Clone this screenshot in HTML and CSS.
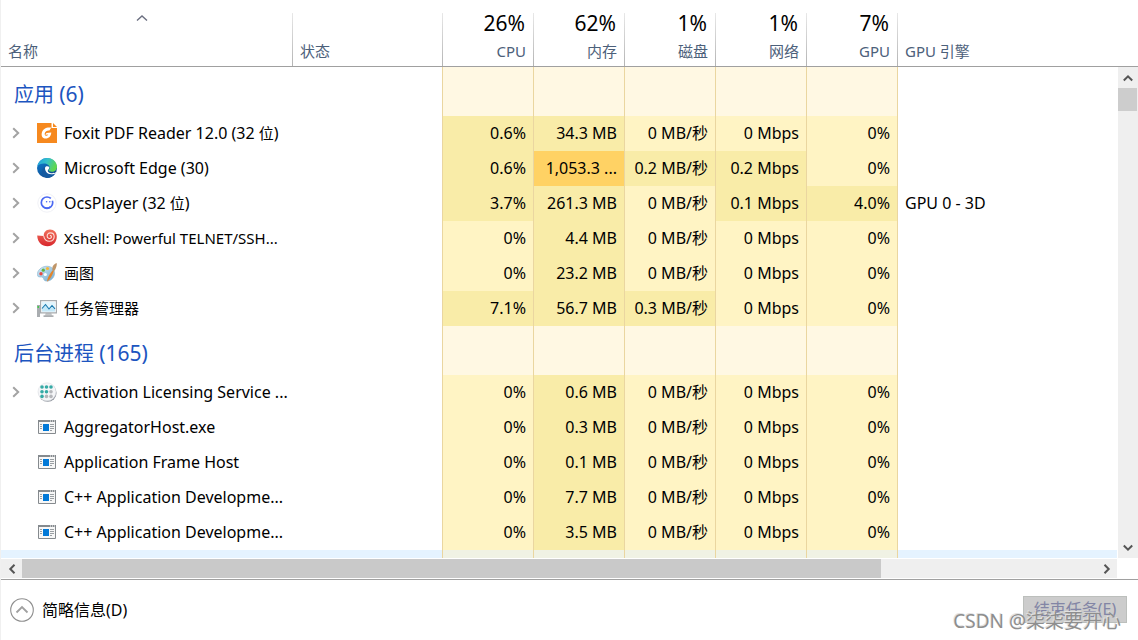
FILE: index.html
```
<!DOCTYPE html>
<html lang="zh-CN">
<head>
<meta charset="utf-8">
<title>任务管理器</title>
<link rel="stylesheet" href="styles.css">
</head>
<body>
<svg class="defs" width="0" height="0" aria-hidden="true">
  <defs>
    <linearGradient id="edge-top" x1="0" y1="0" x2="1" y2="0.4"><stop offset="0" stop-color="#1b9de2"/><stop offset="0.5" stop-color="#35c1c9"/><stop offset="1" stop-color="#5fd84f"/></linearGradient>
    <linearGradient id="edge-low" x1="0" y1="0" x2="0.6" y2="1"><stop offset="0" stop-color="#0c7fd6"/><stop offset="1" stop-color="#114a8b"/></linearGradient>
    <linearGradient id="shell-red" x1="0" y1="0" x2="0" y2="1"><stop offset="0" stop-color="#f0705c"/><stop offset="1" stop-color="#d8262c"/></linearGradient>
    <linearGradient id="pal" x1="0" y1="0" x2="1" y2="1"><stop offset="0" stop-color="#d6ecf8"/><stop offset="1" stop-color="#6fa9d0"/></linearGradient>
    <symbol id="chevron" viewBox="0 0 8 12"><path d="M1.2 1.2 6.2 6l-5 4.8" fill="none" stroke="#a3a3a3" stroke-width="2"/></symbol>
    <symbol id="exe" viewBox="0 0 20 20">
      <path d="M1.500 3.500h17v13h-17z" fill="#f7f7f7" stroke="#858a8e"/>
      <path d="M1 3h18v2H1z" fill="#858a8e"/>
      <path d="M13 4h1M15 4h1M17 4h1" stroke="#fff"/>
      <path d="M3 7.500h2M3 9.500h2M3 11.500h2M13 7.500h4M13 9.500h4M13 11.500h4M13 13.500h2" stroke="#9a9fa3"/>
      <path d="M6 7h6v7H6z" fill="#0078d7"/>
    </symbol>
  </defs>
</svg>
<main class="app">
  <section class="processes">
    <div class="table-wrap">
      <table class="grid">
        <colgroup><col class="col-name"><col class="col-status"><col class="col-num"><col class="col-num"><col class="col-num"><col class="col-num"><col class="col-num"><col></colgroup>
        <thead>
          <tr>
            <th scope="col" class="text-col sorted"><svg class="sort" viewBox="0 0 12 6" width="12" height="6"><path d="M1 5.500 6 1l5 4.500" fill="none" stroke="#6b6f80" stroke-width="1.400"/></svg><span class="label">名称</span></th>
            <th scope="col" class="text-col"><span class="label">状态</span></th>
            <th scope="col"><span class="total">26%</span><span class="label">CPU</span></th>
            <th scope="col"><span class="total">62%</span><span class="label">内存</span></th>
            <th scope="col"><span class="total">1%</span><span class="label">磁盘</span></th>
            <th scope="col"><span class="total">1%</span><span class="label">网络</span></th>
            <th scope="col"><span class="total">7%</span><span class="label">GPU</span></th>
            <th scope="col" class="text-col last"><span class="label">GPU 引擎</span></th>
          </tr>
        </thead>
        <tbody>
          <tr class="group"><th colspan="2" scope="rowgroup">应用 <span class="count">(6)</span></th><td class="heat"></td><td class="heat"></td><td class="heat"></td><td class="heat"></td><td class="heat"></td><td></td></tr>
          <tr>
            <td colspan="2" class="lead"><div class="name"><button class="expand" aria-label="展开"><svg width="8" height="12"><use href="#chevron"/></svg></button>
              <svg class="icon" viewBox="0 0 20 20"><path d="M0 0h14.500v5H20v15H0z" fill="#f6891f"/><path d="M16 0l4 4h-4z" fill="#f6891f"/><path d="M14.200 4.800C10 4 5.500 5.800 4.700 10.500c-.5 3 1.300 5 4 5 3.200 0 5.300-2.300 5.600-6l-4.800.6-1.200 1.600 2.900-.3c-.5 1-1.300 1.500-2.200 1.400-1-.1-1.500-1-1.300-2.200.4-2.300 2.500-3.300 4.700-3.100z" fill="#fff"/></svg>
              <span class="latin">Foxit PDF Reader 12.0 (32 <span class="han">位</span>)</span></div></td>
            <td class="heat mid">0.6%</td><td class="heat mid">34.3 MB</td><td class="heat low">0 MB/秒</td><td class="heat low">0 Mbps</td><td class="heat low">0%</td><td></td>
          </tr>
          <tr>
            <td colspan="2" class="lead"><div class="name"><button class="expand" aria-label="展开"><svg width="8" height="12"><use href="#chevron"/></svg></button>
              <svg class="icon" viewBox="0 0 20 20"><circle cx="10" cy="10" r="10" fill="url(#edge-low)"/><path d="M.3 8.500C1.500 3 5.500 0 10.200 0 16 0 20 4.400 20 8.800c0 3-2.300 5-5 5-2 0-3.500-.8-3.300-1.700.2-.6 1-1 1-2.400C12.700 7.200 10 5.400 7 5.400c-3 0-5.700 1-6.700 3.100z" fill="url(#edge-top)"/><path d="M8 9.500c-1.400 4 1.600 8.200 6 8.200 1.800 0 3.400-.6 4.200-1.600l1-2.100c-1 .8-2.500 1.200-4 1.200-3 0-5-1.500-4.300-3 .6-1 1.700-1.500 1.300-3.200-.9-1-3.400-1.200-4.200.5z" fill="#fff"/><path d="M8.200 8.800c-1 4 2 7.600 6.300 7.500 1.500 0 3-.4 3.900-.8-1.500 2.500-4.900 4.500-8.400 4.500-5.500-1-7-8.500-1.800-11.200z" fill="#1459a0"/></svg>
              <span class="latin">Microsoft Edge (30)</span></div></td>
            <td class="heat mid">0.6%</td><td class="heat high">1,053.3 ...</td><td class="heat mid">0.2 MB/秒</td><td class="heat mid">0.2 Mbps</td><td class="heat low">0%</td><td></td>
          </tr>
          <tr>
            <td colspan="2" class="lead"><div class="name"><button class="expand" aria-label="展开"><svg width="8" height="12"><use href="#chevron"/></svg></button>
              <svg class="icon" viewBox="0 0 20 20"><circle cx="10" cy="10" r="9.200" fill="#fff" stroke="#f0f1f6"/><circle cx="10" cy="9.700" r="5.700" fill="none" stroke="#4a68f2" stroke-width="1.700" stroke-dasharray="33.300 2.500" stroke-dashoffset="3"/><circle cx="9.600" cy="8.800" r=".8" fill="#4a68f2"/><circle cx="12.800" cy="8.800" r=".8" fill="#4a68f2"/><path d="M5.500 12.500c2 3 6 3 8 1" fill="none" stroke="#4a68f2" stroke-width="1.200"/></svg>
              <span class="latin">OcsPlayer (32 <span class="han">位</span>)</span></div></td>
            <td class="heat mid">3.7%</td><td class="heat mid">261.3 MB</td><td class="heat low">0 MB/秒</td><td class="heat mid">0.1 Mbps</td><td class="heat mid">4.0%</td><td class="engine">GPU 0 - 3D</td>
          </tr>
          <tr>
            <td colspan="2" class="lead"><div class="name"><button class="expand" aria-label="展开"><svg width="8" height="12"><use href="#chevron"/></svg></button>
              <svg class="icon" viewBox="0 0 20 20"><path d="M.2 7.500 6.800 8C6.500 4.500 9 1.600 13 1.600c4 0 6.800 2.900 6.800 7C19.800 14 16 18.300 10.500 18.300 5 18.300.5 14.500.2 7.500z" fill="url(#shell-red)"/><path d="M6.800 8c.2 3 2.600 5.400 5.700 5.300 3-.1 4.800-2.200 4.700-4.700-.1-2.200-1.700-3.700-3.800-3.700S10 6.500 10.200 8.200c.1 1.500 1.200 2.400 2.500 2.300 1.200-.1 1.900-1 1.700-2-.2-.7-.8-1.100-1.500-.9" fill="none" stroke="#fde0d8" stroke-width="1.100"/></svg>
              <span>Xshell: Powerful TELNET/SSH...</span></div></td>
            <td class="heat low">0%</td><td class="heat mid">4.4 MB</td><td class="heat low">0 MB/秒</td><td class="heat low">0 Mbps</td><td class="heat low">0%</td><td></td>
          </tr>
          <tr>
            <td colspan="2" class="lead"><div class="name"><button class="expand" aria-label="展开"><svg width="8" height="12"><use href="#chevron"/></svg></button>
              <svg class="icon" viewBox="0 0 20 20"><path d="M1 8.500C3 4.500 8 2.500 12 3.500c4 .8 6 4 5.500 7.500-.5 4.500-4.500 7.500-8.500 7-2.500-.3-2-2.500-3.300-3.600C4.300 13.200 1.200 15 .4 12.500c-.3-1.200 0-2.700.6-4z" fill="url(#pal)" stroke="#91b9d3" stroke-width=".7"/><circle cx="4" cy="10.800" r="1.700" fill="#e64b43"/><circle cx="6.300" cy="7.200" r="1.600" fill="#64b441"/><circle cx="10.500" cy="5.500" r="1.600" fill="#f4b73b"/><circle cx="8.300" cy="11.500" r="1.600" fill="#fff"/><path d="M10.300 18.800c-.4-3 2-7.300 5.200-11.300l1.300.8c-1.500 4-3.300 8-6.500 10.500z" fill="#e2852c"/><path d="M15.300 7.600c.2-2.200-.2-3.800 1-5.200C17.300 1.200 18.700.4 19.600 0c.5 1.600 0 3-.6 4.700-.4 1.400-1.200 2.500-2.200 3.600z" fill="#bf9568"/></svg>
              <span>画图</span></div></td>
            <td class="heat low">0%</td><td class="heat mid">23.2 MB</td><td class="heat low">0 MB/秒</td><td class="heat low">0 Mbps</td><td class="heat low">0%</td><td></td>
          </tr>
          <tr>
            <td colspan="2" class="lead"><div class="name"><button class="expand" aria-label="展开"><svg width="8" height="12"><use href="#chevron"/></svg></button>
              <svg class="icon" viewBox="0 0 20 20"><path d="M0 7h3v12H0z" fill="#a9adb0"/><path d="M.5 8h1.500v2H.5z" fill="#43c94d"/><path d="M9 14h5l1 3.500H8z" fill="#c5c7c9"/><path d="M6.500 17.500h10v1.200h-10z" fill="#888c90"/><path d="M3.600 2.600h15.800v12.300H3.600z" fill="#fff" stroke="#a7abae" stroke-width="1.200"/><path d="M5 4h13v9.500H5z" fill="#e2f5fd"/><path d="M5 10.500 8.500 7l3.500 4 3-3.500 3 3v3H5z" fill="#c3e8f8"/><path d="M5 10.500 8.500 6.500l3.500 4.500 3-3.500 3 3.300" fill="none" stroke="#1878ad" stroke-width="1.100"/></svg>
              <span>任务管理器</span></div></td>
            <td class="heat mid">7.1%</td><td class="heat mid">56.7 MB</td><td class="heat mid">0.3 MB/秒</td><td class="heat low">0 Mbps</td><td class="heat low">0%</td><td></td>
          </tr>
        </tbody>
        <tbody>
          <tr class="group"><th colspan="2" scope="rowgroup">后台进程 <span class="count">(165)</span></th><td class="heat"></td><td class="heat"></td><td class="heat"></td><td class="heat"></td><td class="heat"></td><td></td></tr>
          <tr>
            <td colspan="2" class="lead"><div class="name"><button class="expand" aria-label="展开"><svg width="8" height="12"><use href="#chevron"/></svg></button>
              <svg class="icon" viewBox="0 0 20 20"><circle cx="10.600" cy="10.800" r="9" fill="#92979f"/><circle cx="10" cy="9.800" r="9" fill="#f5f6f8" stroke="#dfe1e6" stroke-width=".6"/><g fill="#35aaa5"><circle cx="5" cy="5" r="1.800"/><circle cx="9.500" cy="5" r="1.800"/><circle cx="14" cy="5" r="1.800"/><circle cx="5" cy="9.700" r="1.800"/><circle cx="9.500" cy="9.700" r="1.800"/><circle cx="5" cy="14.400" r="1.800"/></g><g fill="#b5b7bb"><circle cx="14" cy="9.700" r="1.800"/><circle cx="9.500" cy="14.400" r="1.800"/><circle cx="14" cy="14.400" r="1.800"/></g></svg>
              <span class="latin">Activation Licensing Service ...</span></div></td>
            <td class="heat low">0%</td><td class="heat mid">0.6 MB</td><td class="heat low">0 MB/秒</td><td class="heat low">0 Mbps</td><td class="heat low">0%</td><td></td>
          </tr>
          <tr>
            <td colspan="2" class="lead"><div class="name leaf"><svg class="icon"><use href="#exe"/></svg><span class="latin">AggregatorHost.exe</span></div></td>
            <td class="heat low">0%</td><td class="heat mid">0.3 MB</td><td class="heat low">0 MB/秒</td><td class="heat low">0 Mbps</td><td class="heat low">0%</td><td></td>
          </tr>
          <tr>
            <td colspan="2" class="lead"><div class="name leaf"><svg class="icon"><use href="#exe"/></svg><span class="latin">Application Frame Host</span></div></td>
            <td class="heat low">0%</td><td class="heat mid">0.1 MB</td><td class="heat low">0 MB/秒</td><td class="heat low">0 Mbps</td><td class="heat low">0%</td><td></td>
          </tr>
          <tr>
            <td colspan="2" class="lead"><div class="name leaf"><svg class="icon"><use href="#exe"/></svg><span class="latin">C++ Application Developme...</span></div></td>
            <td class="heat low">0%</td><td class="heat mid">7.7 MB</td><td class="heat low">0 MB/秒</td><td class="heat low">0 Mbps</td><td class="heat low">0%</td><td></td>
          </tr>
          <tr>
            <td colspan="2" class="lead"><div class="name leaf"><svg class="icon"><use href="#exe"/></svg><span class="latin">C++ Application Developme...</span></div></td>
            <td class="heat low">0%</td><td class="heat mid">3.5 MB</td><td class="heat low">0 MB/秒</td><td class="heat low">0 Mbps</td><td class="heat low">0%</td><td></td>
          </tr>
          <tr class="hovered"><td colspan="2" class="lead"></td><td class="heat"></td><td class="heat"></td><td class="heat"></td><td class="heat"></td><td class="heat"></td><td></td></tr>
        </tbody>
      </table>
    </div>
    <div class="side">
      <div class="side-head"></div>
      <div class="vscroll">
        <button class="arrow" aria-label="向上滚动"><svg viewBox="0 0 10 8" width="10" height="8"><path d="M.8 6.500 5 2.300l4.200 4.200" fill="none" stroke="#555" stroke-width="2"/></svg></button>
        <div class="thumb"></div>
        <button class="arrow end" aria-label="向下滚动"><svg viewBox="0 0 10 8" width="10" height="8"><path d="M.8 1.500 5 5.700l4.200-4.200" fill="none" stroke="#555" stroke-width="2"/></svg></button>
      </div>
    </div>
  </section>
  <div class="hscroll-row">
    <div class="hscroll">
      <button class="arrow" aria-label="向左滚动"><svg viewBox="0 0 8 10" width="8" height="10"><path d="M6.500.8 2.300 5l4.200 4.200" fill="none" stroke="#555" stroke-width="2"/></svg></button>
      <div class="track"><div class="thumb"></div></div>
      <button class="arrow" aria-label="向右滚动"><svg viewBox="0 0 8 10" width="8" height="10"><path d="M1.500.8 5.700 5 1.500 9.200" fill="none" stroke="#555" stroke-width="2"/></svg></button>
    </div>
  </div>
  <footer class="footer">
    <button class="details"><svg viewBox="0 0 24 24" width="24" height="24"><circle cx="12" cy="12" r="11.300" fill="#fff" stroke="#8f8f8f" stroke-width="1.100"/><path d="M6.500 14.500 12 9l5.500 5.500" fill="none" stroke="#a0a0a0" stroke-width="1.800"/></svg><span>简略信息(D)</span></button>
    <button class="end-task" disabled>结束任务(E)</button>
    <span class="watermark">CSDN @柒柒要开心</span>
  </footer>
</main>
</body>
</html>
```
FILE: styles.css
```
* { box-sizing: border-box; }
body {
  margin: 0;
  background: #fff;
  color: #000;
  font: 15px/20px "Noto Sans", "Noto Sans CJK SC", sans-serif;
}
button { margin: 0; padding: 0; border: 0; background: none; font: inherit; color: inherit; }
svg { display: block; }
.defs { position: absolute; }
.app {
  display: flex;
  flex-direction: column;
  height: 100vh;
  border-left: 1px solid #f0f0f0;
}
.processes { display: flex; flex: 1; min-height: 0; }
.table-wrap { flex: 1; min-width: 0; overflow: hidden; }

.grid { width: 100%; table-layout: fixed; border-collapse: separate; border-spacing: 0; }
.col-name { width: 292px; }
.col-status { width: 150px; }
.col-num { width: 91px; }
.grid th, .grid td { padding: 0; font-weight: 400; white-space: nowrap; }
.grid thead th {
  height: 67px;
  padding: 9px 8px 2px;
  vertical-align: bottom;
  text-align: right;
  border-bottom: 1px solid #a0a0a0;
  background: linear-gradient(#e8e8e8, #b4b4b4) right 0 top 13px / 1px 53px no-repeat;
}
.grid thead .text-col { text-align: left; padding-left: 7px; }
.grid thead .sorted { padding-right: 18px; }
.grid thead .last { background: none; }
.sort { margin: 0 auto 18px; }
.total { display: block; padding: 0 1px 2px 0; font-size: 21px; line-height: 28px; }
.label { display: block; line-height: 25px; color: #4c607a; }

.grid tbody td { height: 35px; padding-bottom: 2px; }
.grid .group th { height: 49px; padding: 6px 13px 0; text-align: left; font-size: 20px; color: #1c55c0; border-right: 1px solid #ead6a0; }
.count { font-size: 21px; }
.grid .lead { border-right: 1px solid #ead6a0; }
.grid .heat { padding-right: 7px; text-align: right; font-size: 16px; border-right: 1px solid #ead6a0; background: #fff8e3; }
.grid .low { background: #fff4c4; }
.grid .mid { background: #f9eca8; }
.grid .high { background: #ffd264; }
.grid .engine { padding-left: 7px; font-size: 16px; }
.grid .hovered td { background: #e5f3ff; }
.grid .hovered .heat { background: #f0f2e4; }
.name { display: flex; align-items: center; padding-left: 11px; }
.leaf { padding-left: 36px; }
.latin { font-size: 16px; }
.han { font-size: 15px; }
.expand { width: 25px; height: 20px; }
.icon { width: 20px; height: 20px; margin-right: 7px; flex: none; }

.side { display: flex; flex-direction: column; width: 21px; }
.side-head { height: 67px; border-bottom: 1px solid #a0a0a0; }
.vscroll { display: flex; flex-direction: column; flex: 1; margin-left: 1px; background: #efefef; }
.arrow { display: flex; align-items: center; justify-content: center; width: 20px; height: 21px; flex: none; }
.vscroll .thumb { height: 23px; margin-right: 1px; background: #cdcdcd; }
.end { margin-top: auto; }
.hscroll-row { padding: 1px 21px 1px 0; border-bottom: 1px solid #a0a0a0; }
.hscroll { display: flex; background: #efefef; }
.hscroll .arrow { width: 21px; height: 19px; }
.track { flex: 1; }
.track .thumb { width: 80%; height: 19px; background: #c9c9c9; }

.footer { position: relative; display: flex; align-items: center; justify-content: space-between; height: 60px; padding: 0 11px 0 9px; font-size: 16px; }
.details { display: flex; align-items: center; gap: 8px; }
.end-task { width: 104px; height: 27px; margin-bottom: 2px; border: 1px solid #bcbfbc; background: #ccc; color: #8285a5; }
.watermark {
  position: absolute;
  right: 17px;
  bottom: 6px;
  font-size: 19px;
  line-height: 26px;
  color: #8e8e8e;
  text-shadow: -1px -1px 0 #e2e2e2;
}
```
